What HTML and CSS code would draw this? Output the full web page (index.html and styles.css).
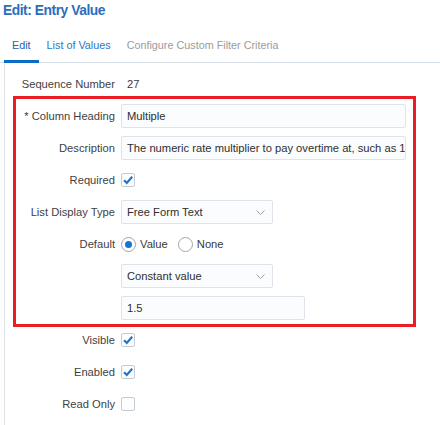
FILE: index.html
```html
<!DOCTYPE html>
<html lang="en">
<head>
<meta charset="utf-8">
<title>Edit: Entry Value</title>
<link rel="stylesheet" href="styles.css">
</head>
<body>
<h1 class="title">Edit: Entry Value</h1>
<div class="tabs">
  <div class="tab active">Edit</div>
  <div class="tab">List of Values</div>
  <div class="tab disabled">Configure Custom Filter Criteria</div>
</div>
<div class="panel">
  <div class="row">
    <div class="label">Sequence Number</div>
    <div class="value">27</div>
  </div>
  <div class="box">
    <div class="row">
      <div class="label"><span class="req">*</span> Column Heading</div>
      <div class="field wide">Multiple</div>
    </div>
    <div class="row">
      <div class="label">Description</div>
      <div class="field wide">The numeric rate multiplier to pay overtime at, such as 1.5</div>
    </div>
    <div class="row">
      <div class="label">Required</div>
      <div class="check on"><svg viewBox="0 0 14 14" width="14" height="14"><path d="M3 7.2 L5.8 10 L11.2 3.8" fill="none" stroke="#1b74d0" stroke-width="2.2"/></svg></div>
    </div>
    <div class="row">
      <div class="label">List Display Type</div>
      <div class="field select">Free Form Text<svg class="chev" viewBox="0 0 9 5" width="9" height="5"><path d="M0.5 0.5 L4.5 4.5 L8.5 0.5" fill="none" stroke="#9aa0a6" stroke-width="1"/></svg></div>
    </div>
    <div class="row">
      <div class="label">Default</div>
      <div class="radios">
        <span class="radio on"></span><span class="rtext">Value</span>
        <span class="radio"></span><span class="rtext">None</span>
      </div>
    </div>
    <div class="row">
      <div class="label"></div>
      <div class="field select">Constant value<svg class="chev" viewBox="0 0 9 5" width="9" height="5"><path d="M0.5 0.5 L4.5 4.5 L8.5 0.5" fill="none" stroke="#9aa0a6" stroke-width="1"/></svg></div>
    </div>
    <div class="row">
      <div class="label"></div>
      <div class="field mid">1.5</div>
    </div>
  </div>
  <div class="row after">
    <div class="label">Visible</div>
    <div class="check on"><svg viewBox="0 0 14 14" width="14" height="14"><path d="M3 7.2 L5.8 10 L11.2 3.8" fill="none" stroke="#1b74d0" stroke-width="2.2"/></svg></div>
  </div>
  <div class="row">
    <div class="label">Enabled</div>
    <div class="check on"><svg viewBox="0 0 14 14" width="14" height="14"><path d="M3 7.2 L5.8 10 L11.2 3.8" fill="none" stroke="#1b74d0" stroke-width="2.2"/></svg></div>
  </div>
  <div class="row">
    <div class="label">Read Only</div>
    <div class="check"></div>
  </div>
</div>
</body>
</html>
```
FILE: styles.css
```css
* { box-sizing: border-box; }
html, body { margin: 0; padding: 0; background: #fff; }
body {
  font-family: "Liberation Sans", Arial, sans-serif;
  font-size: 11.2px;
  color: #333;
}
.title {
  margin: 0;
  padding: 2px 0 0 3px;
  height: 20px;
  line-height: 18px;
  font-size: 13.8px;
  font-weight: bold;
  letter-spacing: -0.45px;
  color: #2a6ebc;
}
.tabs {
  display: flex;
  margin-top: 10px;
  height: 33px;
  border-bottom: 1px solid #d9e1e8;
  padding-left: 4px;
}
.tab {
  height: 33px;
  padding: 8px 8px 0;
  line-height: 14px;
  font-size: 10.8px;
  color: #2f74c4;
}
.tab.active {
  color: #2462b0;
  box-shadow: inset 0 -3px 0 #0d6cc6;
}
.tab.disabled { color: #9b9b9b; }
.panel {
  margin-left: 4px;
  border-left: 1px solid #dde3e9;
  padding: 5px 0 0 8px;
  min-height: calc(100vh - 53px);
}
.row {
  display: flex;
  align-items: center;
  height: 32px;
}
.label {
  width: 102px;
  margin-right: 6px;
  text-align: right;
  color: #3f3f3f;
  white-space: nowrap;
}
.value { color: #3a3a3a; padding-left: 6px; }
.box {
  width: 403px;
  margin-top: -4px;
  margin-bottom: -3px;
  border: 3px solid #ec1c24;
  padding-top: 1px;
}
.box .label { width: 99px; }
.req { color: #3f3f3f; }
.field {
  position: relative;
  height: 24px;
  line-height: 22px;
  padding: 0 5px;
  border: 1px solid #dfe4ea;
  border-radius: 2px;
  background: #fbfcfd;
  color: #2f2f2f;
  white-space: nowrap;
  overflow: hidden;
}
.wide { width: 285px; }
.mid { width: 184px; }
.select { width: 152px; }
.chev { position: absolute; right: 7px; top: 9px; }
.check {
  width: 14px;
  height: 14px;
  border: 1px solid #c3ccd5;
  border-radius: 2px;
  background: #fff;
  position: relative;
}
.check svg { position: absolute; left: -1px; top: -1px; }
.radios { display: flex; align-items: center; }
.radio {
  width: 15px;
  height: 15px;
  border: 1px solid #9ea7b0;
  border-radius: 50%;
  background: #fff;
  position: relative;
}
.radio.on::after {
  content: "";
  position: absolute;
  left: 3px;
  top: 3px;
  width: 7px;
  height: 7px;
  border-radius: 50%;
  background: #1576d1;
}
.rtext { margin: 0 10px 0 4px; color: #3a3a3a; }
```
